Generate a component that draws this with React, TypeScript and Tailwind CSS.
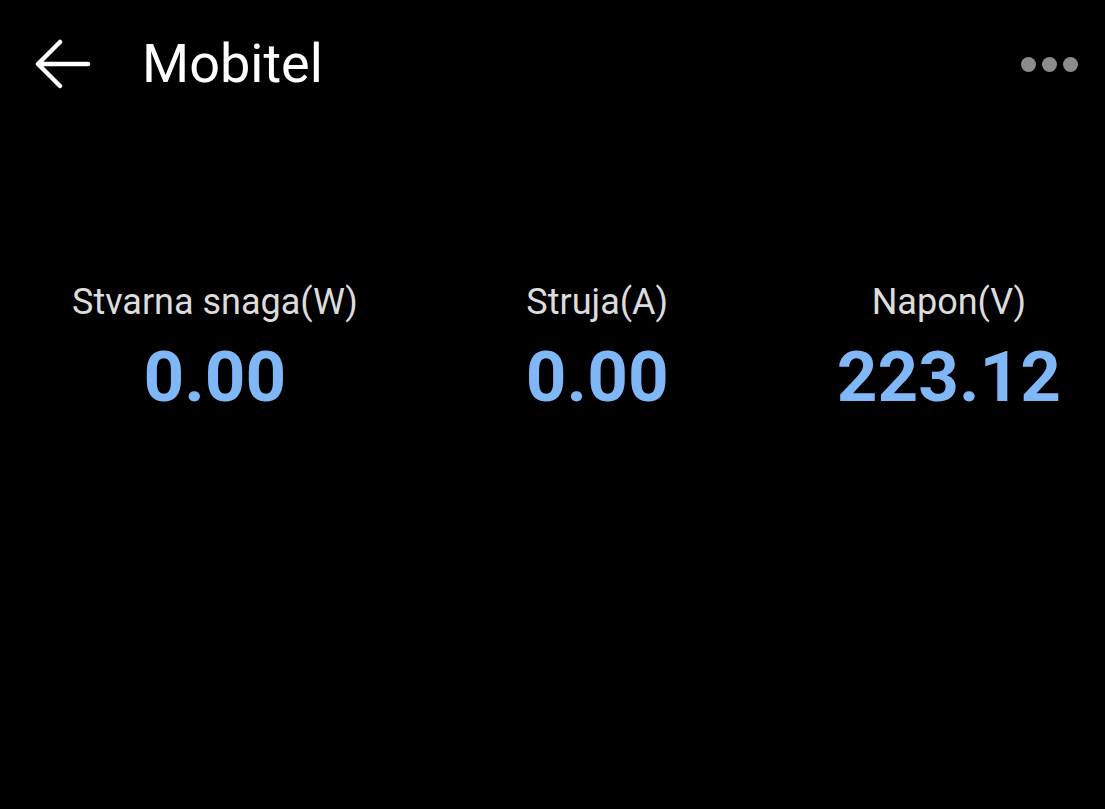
const metrics = [
  { label: 'Stvarna snaga(W)', value: '0.00' },
  { label: 'Struja(A)', value: '0.00' },
  { label: 'Napon(V)', value: '223.12' },
];

export default function App() {
  return (
    <div className="w-[1105px] h-[809px] bg-black text-white font-['Roboto',sans-serif] overflow-hidden">
      {/* header */}
      <div className="flex items-center h-[132px] pl-[35px] pr-[27px] pb-[4px]">
        <svg width="56" height="50" viewBox="0 0 56 50" fill="none" stroke="white" strokeWidth="4.5" strokeLinecap="round" strokeLinejoin="round">
          <path d="M53 25H4M25 3L3 25l22 22" />
        </svg>
        <h1 className="ml-[51px] text-[54px] leading-none font-normal">Mobitel</h1>
        <div className="ml-auto flex gap-[6px]">
          <span className="w-[15px] h-[15px] rounded-full bg-[#8c8c8c]" />
          <span className="w-[15px] h-[15px] rounded-full bg-[#8c8c8c]" />
          <span className="w-[15px] h-[15px] rounded-full bg-[#8c8c8c]" />
        </div>
      </div>

      {/* metrics */}
      <div className="flex justify-between pl-[72px] pr-[44px] pt-[152px]">
        {metrics.map((m) => (
          <div key={m.label} className="flex flex-col items-center">
            <span className="text-[36px] leading-none text-[#dcdcdc]">{m.label}</span>
            <span className="mt-[21px] text-[71px] leading-none font-bold text-[#80b7f7]">{m.value}</span>
          </div>
        ))}
      </div>
    </div>
  );
}
